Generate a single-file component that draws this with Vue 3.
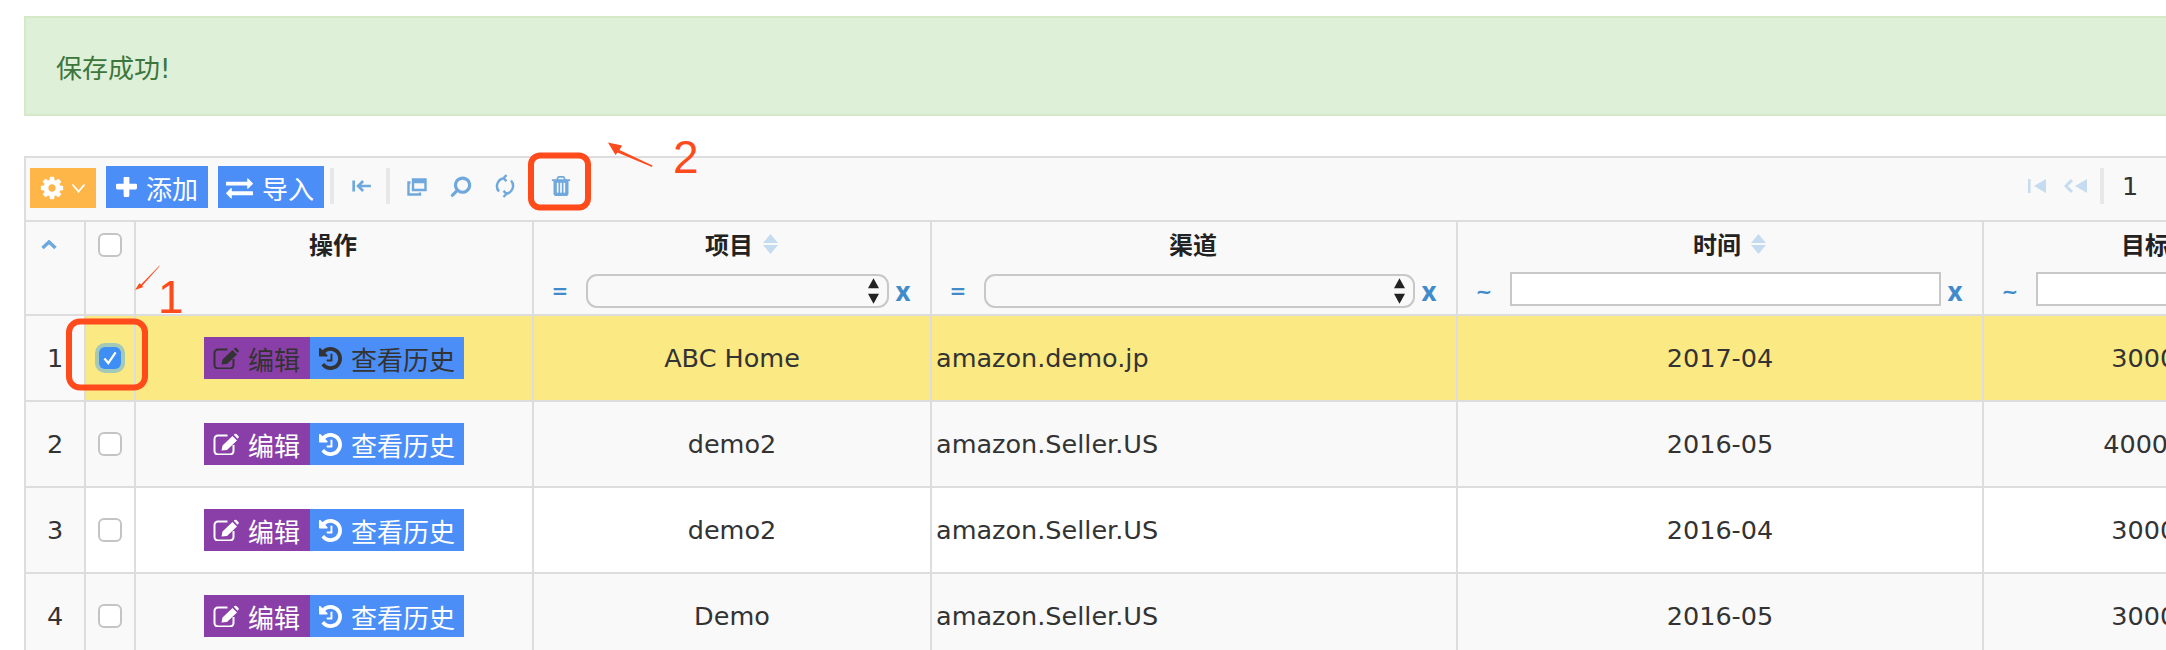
<script setup>
const ICON = {
  gear: 'M1152 896q0-106-75-181t-181-75-181 75-75 181 75 181 181 75 181-75 75-181zm512-109v222q0 12-8 23t-20 13l-185 28q-19 54-39 91 35 50 107 138 10 12 10 25t-9 23q-27 37-99 108t-94 71q-12 0-26-9l-138-108q-44 23-91 38-16 136-29 186-7 28-36 28h-222q-14 0-24.500-8.500t-11.500-21.500l-28-184q-49-16-90-37l-141 107q-10 9-25 9-14 0-25-11-126-114-165-168-7-10-7-23 0-12 8-23 15-21 51-66.500t54-70.500q-27-50-41-99l-183-27q-13-2-21-12.500t-8-23.500v-222q0-12 8-23t19-13l186-28q14-46 39-92-40-57-107-138-10-12-10-24 0-10 9-23 26-36 98.500-107.500t94.500-71.500q13 0 26 10l138 107q44-23 91-38 16-136 29-186 7-28 36-28h222q14 0 24.500 8.500t11.500 21.500l28 184q49 16 90 37l142-107q9-9 24-9 13 0 25 10 129 119 165 170 7 8 7 22 0 12-8 23-15 21-51 66.500t-54 70.500q26 50 41 98l183 28q13 2 21 12.500t8 23.500z',
  plus: 'M1600 736v192q0 40-28 68t-68 28h-416v416q0 40-28 68t-68 28h-192q-40 0-68-28t-28-68v-416h-416q-40 0-68-28t-28-68v-192q0-40 28-68t68-28h416v-416q0-40 28-68t68-28h192q40 0 68 28t28 68v416h416q40 0 68 28t28 68z',
  exchange: 'M1792 1184v192q0 13-9.500 22.500t-22.500 9.500h-1376v192q0 13-9.500 22.500t-22.500 9.500q-12 0-24-10l-319-320q-9-9-9-22 0-14 9-23l320-320q9-9 23-9 13 0 22.500 9.500t9.500 22.500v192h1376q13 0 22.500 9.500t9.500 22.500zm0-544q0 14-9 23l-320 320q-9 9-23 9-13 0-22.500-9.500t-9.500-22.500v-192h-1376q-13 0-22.500-9.500t-9.500-22.500v-192q0-13 9.500-22.500t22.500-9.500h1376v-192q0-14 9-23t23-9q12 0 24 10l319 319q9 9 9 23z',
  history: 'M1664 896q0 156-61 298t-164 245-245 164-298 61q-172 0-327-72.500t-264-204.500q-7-10-6.500-22.500t8.500-20.500l137-138q10-9 25-9 16 2 23 12 73 95 179 147t225 52q104 0 198.500-40.500t163.500-109.500 109.500-163.500 40.500-198.500-40.500-198.500-109.500-163.500-163.500-109.500-198.500-40.500q-98 0-188 35.500t-160 101.500l137 138q31 30 14 69-17 40-59 40h-448q-26 0-45-19t-19-45v-448q0-42 40-59 39-17 69 14l130 129q107-101 244.500-156.500t284.500-55.500q156 0 298 61t245 164 164 245 61 298zm-640-288v448q0 14-9 23t-23 9h-320q-14 0-23-9t-9-23v-64q0-14 9-23t23-9h224v-352q0-14 9-23t23-9h64q14 0 23 9t9 23z',
  trash: 'M704 1376v-704q0-14-9-23t-23-9h-64q-14 0-23 9t-9 23v704q0 14 9 23t23 9h64q14 0 23-9t9-23zm256 0v-704q0-14-9-23t-23-9h-64q-14 0-23 9t-9 23v704q0 14 9 23t23 9h64q14 0 23-9t9-23zm256 0v-704q0-14-9-23t-23-9h-64q-14 0-23 9t-9 23v704q0 14 9 23t23 9h64q14 0 23-9t9-23zm-544-992h448l-48-117q-7-9-17-11h-317q-10 2-17 11zm928 32v64q0 14-9 23t-23 9h-96v948q0 83-47 143.500t-113 60.500h-832q-66 0-113-58.500t-47-141.500v-952h-96q-14 0-23-9t-9-23v-64q0-14 9-23t23-9h309l70-167q15-37 54-63t79-26h320q40 0 79 26t54 63l70 167h309q14 0 23 9t9 23z',
  search: 'M1216 832q0-185-131.500-316.500t-316.500-131.500-316.500 131.500-131.500 316.500 131.500 316.500 316.500 131.500 316.500-131.500 131.500-316.500zm512 832q0 52-38 90t-90 38q-54 0-90-38l-343-342q-179 124-399 124-143 0-273.500-55.500t-225-150-150-225-55.500-273.500 55.500-273.500 150-225 225-150 273.500-55.500 273.500 55.500 225 150 150 225 55.500 273.500q0 220-124 399l343 343q37 37 37 90z'
}
const rows = [
  { n: 1, project: 'ABC Home', channel: 'amazon.demo.jp', time: '2017-04', target: '300000', selected: true },
  { n: 2, project: 'demo2', channel: 'amazon.Seller.US', time: '2016-05', target: '4000000' },
  { n: 3, project: 'demo2', channel: 'amazon.Seller.US', time: '2016-04', target: '300000' },
  { n: 4, project: 'Demo', channel: 'amazon.Seller.US', time: '2016-05', target: '300000' }
]
</script>

<template>
  <div class="page">
    <div class="alert">保存成功!</div>

    <div class="grid">
      <div class="toolbar">
        <button class="btn gearbtn">
          <svg class="i20" viewBox="0 0 1792 1792"><path :d="ICON.gear" /></svg>
          <svg class="caret" viewBox="0 0 14 10"><path d="M1 1.500 7 8.500l6-7" /></svg>
        </button>
        <button class="btn blue addbtn">
          <svg class="iplus" viewBox="192 192 1408 1408"><path :d="ICON.plus" /></svg>添加
        </button>
        <button class="btn blue impbtn">
          <svg class="i27" viewBox="0 0 1792 1792"><path :d="ICON.exchange" /></svg>导入
        </button>
        <span class="sep first"></span>
        <span class="tool first-tool">
          <svg class="ui" viewBox="0 0 18 16"><path class="st" d="M1.500 3v10M17 8H6M10 3.500 5.500 8l4.500 4.500" /></svg>
        </span>
        <span class="sep"></span>
        <span class="tool after-sep">
          <svg class="ui" viewBox="0 0 20 20"><path class="st" d="M6 3.500h12.500V14H6zM6 6h12.500M3.500 6.500H1.500V18.500H13V16.500" /></svg>
        </span>
        <span class="tool">
          <svg class="ui flip big" viewBox="0 0 1792 1792"><path :d="ICON.search" /></svg>
        </span>
        <span class="tool">
          <svg class="ui tall" viewBox="0 0 20 24"><path class="st" d="M4 17.500A8 8 0 0 1 9.500 4.200M16 6.500A8 8 0 0 1 10.500 19.800M11.500 1 8.500 4.200l3 3M8.500 23l3-3.200-3-3" /></svg>
        </span>
        <span class="tool trash">
          <svg class="ui" viewBox="0 0 1408 1536"><path transform="translate(-192 -128)" :d="ICON.trash" /></svg>
        </span>

        <div class="pager">
          <span class="pg-ico">
            <svg class="pg-first" viewBox="0 0 18 16"><path d="M0 1h2.500v14H0zM18 1v14L6 8z" /></svg>
          </span>
          <span class="pg-ico">
            <svg class="pg-prev" viewBox="0 0 23 16"><path class="pg-st" d="M8 2 2 8l6 6" /><path d="M23 1v14L11 8z" /></svg>
          </span>
          <span class="sep pg-sep"></span>
          <span class="pg-num">1</span>
        </div>
      </div>

      <table class="tbl">
        <colgroup>
          <col class="c-n" /><col class="c-ck" /><col class="c-op" /><col class="c-pj" /><col class="c-ch" /><col class="c-tm" /><col class="c-tg" />
        </colgroup>
        <thead>
          <tr>
            <th class="num-h">
              <svg class="collapse" viewBox="0 0 16 10"><path d="M1.500 8 8 2l6.500 6" /></svg>
            </th>
            <th class="ck-h"><span class="check"></span></th>
            <th><div class="title">操作</div></th>
            <th>
              <div class="title">项目<svg class="sort" viewBox="0 0 15 20"><path d="M7.500 0 15 9H0zM7.500 20 0 11h15z" /></svg></div>
              <div class="filter">
                <span class="op eq">=</span>
                <span class="sel"><select class="select"></select><svg class="updown" viewBox="0 0 12 28"><path d="M6 0l6 11H0zM6 28 0 17h12z" /></svg></span>
                <span class="x">x</span>
              </div>
            </th>
            <th>
              <div class="title">渠道</div>
              <div class="filter">
                <span class="op eq">=</span>
                <span class="sel"><select class="select"></select><svg class="updown" viewBox="0 0 12 28"><path d="M6 0l6 11H0zM6 28 0 17h12z" /></svg></span>
                <span class="x">x</span>
              </div>
            </th>
            <th>
              <div class="title">时间<svg class="sort" viewBox="0 0 15 20"><path d="M7.500 0 15 9H0zM7.500 20 0 11h15z" /></svg></div>
              <div class="filter">
                <span class="op">~</span>
                <input class="text" type="text" />
                <span class="x">x</span>
              </div>
            </th>
            <th>
              <div class="title">目标额<svg class="sort" viewBox="0 0 15 20"><path d="M7.500 0 15 9H0zM7.500 20 0 11h15z" /></svg></div>
              <div class="filter">
                <span class="op">~</span>
                <input class="text" type="text" />
                <span class="x">x</span>
              </div>
            </th>
          </tr>
        </thead>
        <tbody>
          <tr v-for="r in rows" :key="r.n" :class="{ selected: r.selected, odd: r.n % 2 === 0 }">
            <td class="num">{{ r.n }}</td>
            <td class="ck">
              <span v-if="r.selected" class="check on">
                <svg viewBox="0 0 16 16"><path d="M3 8.500 6.500 12.500 13 3" /></svg>
              </span>
              <span v-else class="check"></span>
            </td>
            <td class="ops">
              <span class="group">
                <span class="btn purple editbtn">
                  <svg class="iedit" viewBox="0 0 26 22">
                    <path class="edit-box" d="M14.500 2.500H5A3.500 3.500 0 0 0 1.500 6v12A3.500 3.500 0 0 0 5 21.500h12a3.500 3.500 0 0 0 3.500-3.500v-6" />
                    <path d="M8.500 17.500 9.500 12.500 19.500 3 24 7.500 14 17zM20.700 1.800l1-.8a1.300 1.300 0 0 1 1.700 0l2 2a1.300 1.300 0 0 1 0 1.800l-.9.900z" />
                  </svg>编辑
                </span>
                <span class="btn blue histbtn"><svg class="i23" viewBox="128 128 1536 1536"><path :d="ICON.history" /></svg>查看历史</span>
              </span>
            </td>
            <td class="ctr">{{ r.project }}</td>
            <td class="left">{{ r.channel }}</td>
            <td class="ctr">{{ r.time }}</td>
            <td class="ctr">{{ r.target }}</td>
          </tr>
        </tbody>
      </table>
    </div>

    <svg class="marks" width="2166" height="650" viewBox="0 0 2166 650">
      <rect class="box" x="531" y="155.500" width="57" height="52" rx="9" />
      <rect class="box" x="69" y="321.500" width="76" height="66" rx="11" />
      <path class="ink" d="M608 142.500 622 145.500 619.500 150 652.500 165.500 652 167 617.500 152.500 615.500 155z" />
      <path class="ink" d="M135 290 139.500 283 141 284.500 159.500 265.500 159.800 266 142 286 143.500 287z" />
    </svg>
    <span class="tag tag1">1</span>
    <span class="tag tag2">2</span>
  </div>
</template>

<style scoped>
.page {
  position: relative;
  width: 2166px;
  height: 650px;
  overflow: hidden;
  box-sizing: border-box;
  padding: 16px 0 0 24px;
  font-family: "DejaVu Sans", "Noto Sans CJK SC", sans-serif;
  font-size: 25.500px;
  color: #333;
  background: #fff;
}
.alert {
  box-sizing: border-box;
  width: 2320px;
  height: 100px;
  margin-bottom: 40px;
  padding-left: 30px;
  display: flex;
  align-items: center;
  background: #dff0d8;
  border: 2px solid #d6e9c6;
  color: #3c763d;
  font-family: "DejaVu Sans", "Noto Sans CJK SC", sans-serif;
  font-size: 26px;
}
.grid {
  box-sizing: border-box;
  width: 2320px;
  border-left: 2px solid #ddd;
  border-top: 2px solid #ddd;
  background: #f9f9f9;
}
.toolbar {
  box-sizing: border-box;
  height: 64px;
  border-bottom: 2px solid #ddd;
  padding: 8px 0 0 4px;
  display: flex;
  align-items: flex-start;
}
.btn {
  box-sizing: border-box;
  border: 0;
  margin: 0;
  height: 42px;
  display: inline-flex;
  align-items: center;
  font-family: "Noto Sans CJK SC", sans-serif;
  font-size: 26px;
  color: #fff;
  fill: #fff;
}
.blue { background: #4b8ef8; }
.purple { background: #8a3fa8; }
.gearbtn {
  width: 66px;
  height: 40px;
  margin-top: 2px;
  padding: 0 0 0 9px;
  background: #ffb648;
  gap: 6px;
}
.i20 { width: 26px; height: 26px; flex: none; }
.caret { width: 15px; height: 10px; fill: none; stroke: #fff; stroke-width: 1.800; flex: none; }
.addbtn { width: 102px; margin-left: 10px; padding-left: 10px; gap: 9px; }
.impbtn { width: 106px; margin-left: 10px; padding-left: 8px; gap: 9px; }
.iplus { width: 21px; height: 21px; flex: none; }
.iedit { width: 26px; height: 22px; flex: none; }
.edit-box { fill: none; stroke: #fff; stroke-width: 2; }
.selected .edit-box { stroke: #333; }
.i23 { width: 23px; height: 23px; flex: none; }
.i27 { width: 27px; height: 27px; flex: none; }
.sep {
  width: 4px;
  height: 36px;
  margin-top: 2px;
  background: #e8e8e8;
  flex: none;
}
.sep.first { margin-left: 6px; }
.tool {
  width: 44px;
  height: 36px;
  margin-top: 2px;
  flex: none;
  display: flex;
  align-items: center;
  justify-content: center;
  fill: #6fa8dc;
}
.first-tool { width: 52px; padding-left: 3px; box-sizing: border-box; }
.after-sep { margin-left: 5px; }
.trash { margin-left: 12px; }
.ui { width: 20px; height: 20px; }
.ui.tall { height: 24px; }
.ui.big { width: 22px; height: 22px; }
.flip { transform: scaleX(-1); }
.st { fill: none; stroke: #6fa8dc; stroke-width: 2.400; }
.pager {
  margin-left: auto;
  width: 316px;
  height: 36px;
  margin-top: 2px;
  display: flex;
  align-items: center;
  fill: #c5dcf0;
}
.pg-ico { width: 36px; flex: none; display: flex; align-items: center; }
.pg-first { width: 18px; height: 16px; }
.pg-prev { width: 23px; height: 16px; }
.pg-st { fill: none; stroke: #c5dcf0; stroke-width: 3; }
.pg-sep { margin: 0; }
.pg-num { margin-left: 18px; }
.tbl {
  table-layout: fixed;
  border-collapse: separate;
  border-spacing: 0;
  width: 1958px;
}
.c-n { width: 60px; }
.c-ck { width: 50px; }
.c-op { width: 398px; }
.c-pj { width: 398px; }
.c-ch { width: 526px; }
.c-tm { width: 526px; }
.c-tg { width: 354px; }
th, td {
  box-sizing: border-box;
  border-right: 2px solid #ddd;
  border-bottom: 2px solid #ddd;
  padding: 0;
}
th {
  height: 94px;
  vertical-align: top;
  background: #f9f9f9;
  font-weight: 700;
  text-align: center;
  font-family: "Noto Sans CJK SC", sans-serif;
  font-size: 24px;
  color: #222;
}
.title {
  height: 50px;
  padding: 0 2px 6px 0;
  box-sizing: border-box;
  line-height: 34px;
  display: flex;
  justify-content: center;
  align-items: center;
  gap: 10px;
  white-space: nowrap;
}
.sort { width: 15px; height: 20px; fill: #c5dcf0; flex: none; margin-right: -21px; }
.collapse { display: block; margin: 18px auto 0 15px; width: 16px; height: 10px; fill: none; stroke: #6fa8dc; stroke-width: 3.500; }
.check {
  box-sizing: border-box;
  display: block;
  width: 24px;
  height: 24px;
  margin: 0 auto;
  border: 2px solid #c4c4c4;
  border-radius: 6px;
  background: #fff;
}
.ck-h .check { margin-top: 11px; }
.check.on {
  width: 22px;
  height: 22px;
  border: 0;
  background: #3d8ef5;
  box-shadow: 0 0 0 4px #a3c9b8;
  display: flex;
  align-items: center;
  justify-content: center;
}
.check.on svg { width: 18px; height: 18px; fill: none; stroke: #fff; stroke-width: 2; }
.filter {
  display: flex;
  align-items: center;
  height: 38px;
  padding: 0 13px 0 0;
}
.op {
  width: 52px;
  flex: none;
  text-align: center;
  color: #428bca;
  font-family: "DejaVu Sans", sans-serif;
  font-size: 20px;
  font-weight: 700;
  line-height: 38px;
}
.sel { position: relative; flex: 1; min-width: 0; display: block; height: 34px; }
.select {
  appearance: none;
  display: block;
  box-sizing: border-box;
  width: 100%;
  height: 34px;
  border: 2px solid #c8c8c8;
  border-radius: 11px;
  background: #f9f9f9;
  margin: 0;
}
.updown { position: absolute; right: 10px; top: 3px; width: 11px; height: 28px; fill: #222; }
.text {
  flex: 1;
  min-width: 0;
  box-sizing: border-box;
  height: 34px;
  border: 2px solid #c8c8c8;
  border-radius: 0;
  background: #fff;
  margin: 0 0 4px;
  padding: 0;
}
.x {
  width: 28px;
  flex: none;
  text-align: center;
  color: #428bca;
  font-family: "Noto Sans", sans-serif;
  font-size: 26px;
  font-weight: 700;
  line-height: 38px;
}
td {
  height: 86px;
  white-space: nowrap;
  overflow: hidden;
  background: #fff;
}
.odd td { background: #f9f9f9; }
.selected td { background: #fbe983; }
td.num { background: #f9f9f9; text-align: center; }
.selected .btn { color: #333; fill: #333; }
.ck { text-align: center; }
.ops { text-align: center; }
.group { display: inline-flex; vertical-align: middle; }
.editbtn { width: 106px; padding-left: 9px; gap: 9px; }
.histbtn { width: 154px; padding-left: 9px; gap: 9px; }
.ctr { text-align: center; }
.left { padding-left: 4px; }
.marks { position: absolute; left: 0; top: 0; pointer-events: none; }
.box { fill: none; stroke: #ff4a1c; stroke-width: 6; }
.ink { fill: #ff4a1c; }
.tag {
  position: absolute;
  font-family: "Liberation Sans", sans-serif;
  font-size: 46px;
  line-height: 46px;
  color: #ff4a1c;
}
.tag1 { left: 158px; top: 274px; }
.tag2 { left: 673px; top: 134px; }
</style>
